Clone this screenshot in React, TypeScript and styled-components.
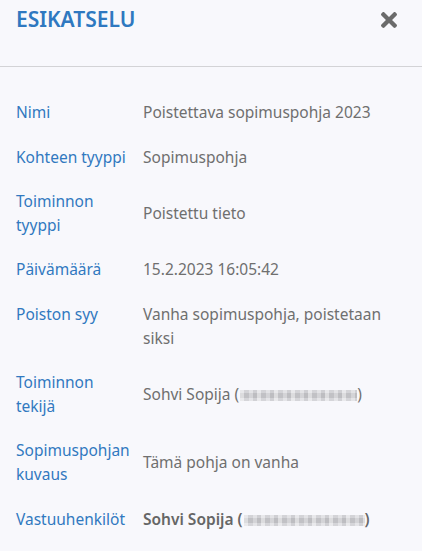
import React from "react";
import styled, { createGlobalStyle } from "styled-components";
import { FaTimes } from "react-icons/fa";

type Row = {
  label: string;
  value: React.ReactNode;
};

const GlobalStyle = createGlobalStyle`
  body {
    margin: 0;
    background: #f8f8fc;
    font-family: "Noto Sans", "Open Sans", sans-serif;
  }
`;

const Panel = styled.div`
  width: 422px;
  min-height: 551px;
  background: #f8f8fc;
`;

const Header = styled.div`
  display: flex;
  justify-content: space-between;
  align-items: flex-start;
  box-sizing: border-box;
  height: 67px;
  padding: 6px 16px 0 16px;
  border-bottom: 1px solid #d3d3d6;
`;

const Title = styled.h2`
  margin: 0;
  font-size: 21px;
  line-height: 26px;
  font-weight: 600;
  color: #2f78c0;
`;

const CloseButton = styled.button`
  display: flex;
  align-items: center;
  justify-content: center;
  border: none;
  background: none;
  padding: 0;
  margin: 2px 9px 0 0;
  width: 16px;
  height: 24px;
  color: #6b6b6b;
  cursor: pointer;
`;

const Body = styled.div`
  padding: 23px 16px 0 16px;
`;

const DetailRow = styled.div`
  display: grid;
  grid-template-columns: 127px 1fr;
  padding: 10.2px 0;
  font-size: 15.5px;
  line-height: 24px;
`;

const Label = styled.div`
  align-self: start;
  padding-right: 9px;
  color: #3179c0;
`;

const Value = styled.div`
  align-self: center;
  color: #6f6f6f;
`;

const Strong = styled.span`
  font-weight: 600;
  color: #666666;
`;

// pixelated (hidden) e-mail address
const Mosaic = styled.span<{ $w: number }>`
  display: inline-block;
  width: ${(p) => p.$w}px;
  height: 11px;
  margin-left: 1px;
  vertical-align: -1px;
  background:
    repeating-linear-gradient(
      90deg,
      rgba(255, 255, 255, 0.35) 0 4px,
      rgba(0, 0, 0, 0.04) 4px 9px,
      rgba(255, 255, 255, 0.2) 9px 13px,
      rgba(0, 0, 0, 0.06) 13px 17px
    ),
    linear-gradient(180deg, #dcdce0 0 30%, #c9c9cd 30% 75%, #dedee2 75% 100%);
  filter: blur(0.6px);
`;

const App: React.FC = () => {
  const rows: Row[] = [
    { label: "Nimi", value: "Poistettava sopimuspohja 2023" },
    { label: "Kohteen tyyppi", value: "Sopimuspohja" },
    { label: "Toiminnon tyyppi", value: "Poistettu tieto" },
    { label: "Päivämäärä", value: "15.2.2023 16:05:42" },
    { label: "Poiston syy", value: "Vanha sopimuspohja, poistetaan siksi" },
    {
      label: "Toiminnon tekijä",
      value: (
        <>
          Sohvi Sopija (<Mosaic $w={117} />)
        </>
      ),
    },
    { label: "Sopimuspohjan kuvaus", value: "Tämä pohja on vanha" },
    {
      label: "Vastuuhenkilöt",
      value: (
        <Strong>
          Sohvi Sopija (<Mosaic $w={121} />)
        </Strong>
      ),
    },
  ];

  return (
    <Panel>
      <GlobalStyle />
      <Header>
        <Title>ESIKATSELU</Title>
        <CloseButton aria-label="Sulje">
          <FaTimes size={24} />
        </CloseButton>
      </Header>
      <Body>
        {rows.map((row) => (
          <DetailRow key={row.label}>
            <Label>{row.label}</Label>
            <Value>{row.value}</Value>
          </DetailRow>
        ))}
      </Body>
    </Panel>
  );
};

export default App;
